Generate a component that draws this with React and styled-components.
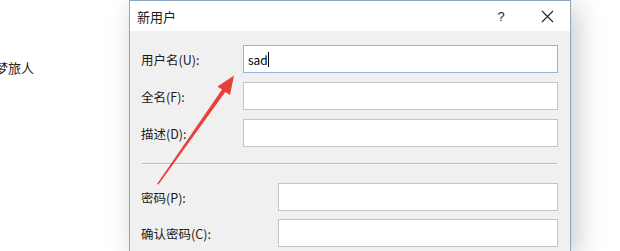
import styled, { createGlobalStyle } from 'styled-components'

const GlobalStyle = createGlobalStyle`
  html, body {
    margin: 0;
    padding: 0;
    background: #ffffff;
  }
  body {
    font-family: "Microsoft YaHei", "Noto Sans CJK SC", "Noto Sans", sans-serif;
    color: #1a1a1a;
  }
`

const Desktop = styled.div`
  position: relative;
  display: flex;
  width: 620px;
  height: 251px;
  overflow: hidden;
  background: #ffffff;
`

const Side = styled.div`
  width: 129px;
  flex: none;
  overflow: hidden;
`

const SideText = styled.div`
  margin: 58px 0 0 -5px;
  font-size: 13px;
  line-height: 20px;
  color: #222;
  white-space: nowrap;
`

const WindowColumn = styled.div`
  display: flex;
  flex-direction: column;
`

const Peek = styled.div`
  height: 2px;
  overflow: hidden;
  padding-left: 16px;
`

const PeekText = styled.div`
  margin-top: -10px;
  font-size: 13px;
  line-height: 14px;
  color: #333;
  white-space: nowrap;
  filter: blur(0.5px);
`

const Dialog = styled.section`
  width: 440px;
  border: 1px solid #8ea7bf;
  background: #f0f0f0;
  box-shadow: 6px 6px 26px rgba(0, 0, 0, 0.22);
`

const TitleBar = styled.header`
  display: flex;
  align-items: center;
  height: 30px;
  padding-left: 7px;
  background: #ffffff;
  font-size: 13px;
`

const Title = styled.div`
  flex: 1;
`

const TitleButton = styled.div`
  display: flex;
  align-items: center;
  justify-content: center;
  width: 46px;
  height: 30px;
  font-family: "Segoe UI", "Liberation Sans", sans-serif;
  font-size: 13px;
  color: #222;
`

const Body = styled.div`
  padding: 14px 12px 4px 11px;
`

const FieldGroup = styled.div`
  display: grid;
  grid-template-columns: ${({ $labelWidth }) => $labelWidth}px 1fr;
  row-gap: ${({ $gap }) => $gap}px;
  align-items: center;
`

const Label = styled.label`
  font-size: 12.5px;
  color: #1a1a1a;
  white-space: nowrap;
`

const Input = styled.div`
  height: 26px;
  border: 1px solid ${({ $focused }) => ($focused ? '#8fb7e0' : '#c4c4c4')};
  background: #ffffff;
  display: flex;
  align-items: center;
  padding-left: 4px;
  font-size: 12px;
  color: #000;
`

const Caret = styled.span`
  display: inline-block;
  width: 1px;
  height: 15px;
  background: #000;
`

const Separator = styled.hr`
  margin: 16px 1px 18px 1px;
  border: none;
  border-top: 1px solid #b9b9b9;
  border-bottom: 1px solid #fafafa;
`

const Arrow = styled.svg`
  position: absolute;
  left: 0;
  top: 0;
  pointer-events: none;
`

export default function App() {
  return (
    <>
      <GlobalStyle />
      <Desktop>
        <Side>
          <SideText>梦旅人</SideText>
        </Side>
        <WindowColumn>
          <Peek>
            <PeekText>用户账户控制面板中的本地用户和组管理设置选项</PeekText>
          </Peek>
          <Dialog>
            <TitleBar>
              <Title>新用户</Title>
              <TitleButton>?</TitleButton>
              <TitleButton>
                <svg width="13" height="13" viewBox="0 0 13 13">
                  <path d="M1 1 L12 12 M12 1 L1 12" stroke="#222" strokeWidth="1.1" fill="none" />
                </svg>
              </TitleButton>
            </TitleBar>
            <Body>
              <FieldGroup $labelWidth={102} $gap={9}>
                <Label>用户名(U):</Label>
                <Input $focused>
                  sad<Caret />
                </Input>
                <Label>全名(F):</Label>
                <Input />
                <Label>描述(D):</Label>
                <Input />
              </FieldGroup>
              <Separator />
              <FieldGroup $labelWidth={137} $gap={8}>
                <Label>密码(P):</Label>
                <Input />
                <Label>确认密码(C):</Label>
                <Input />
              </FieldGroup>
            </Body>
          </Dialog>
        </WindowColumn>
        <Arrow width="620" height="251" viewBox="0 0 620 251">
          <polygon
            points="157,184 222,89.5 217.5,86.5 234,75.5 230,95 225.3,92 158.5,184.5"
            fill="#e8403a"
          />
        </Arrow>
      </Desktop>
    </>
  )
}
